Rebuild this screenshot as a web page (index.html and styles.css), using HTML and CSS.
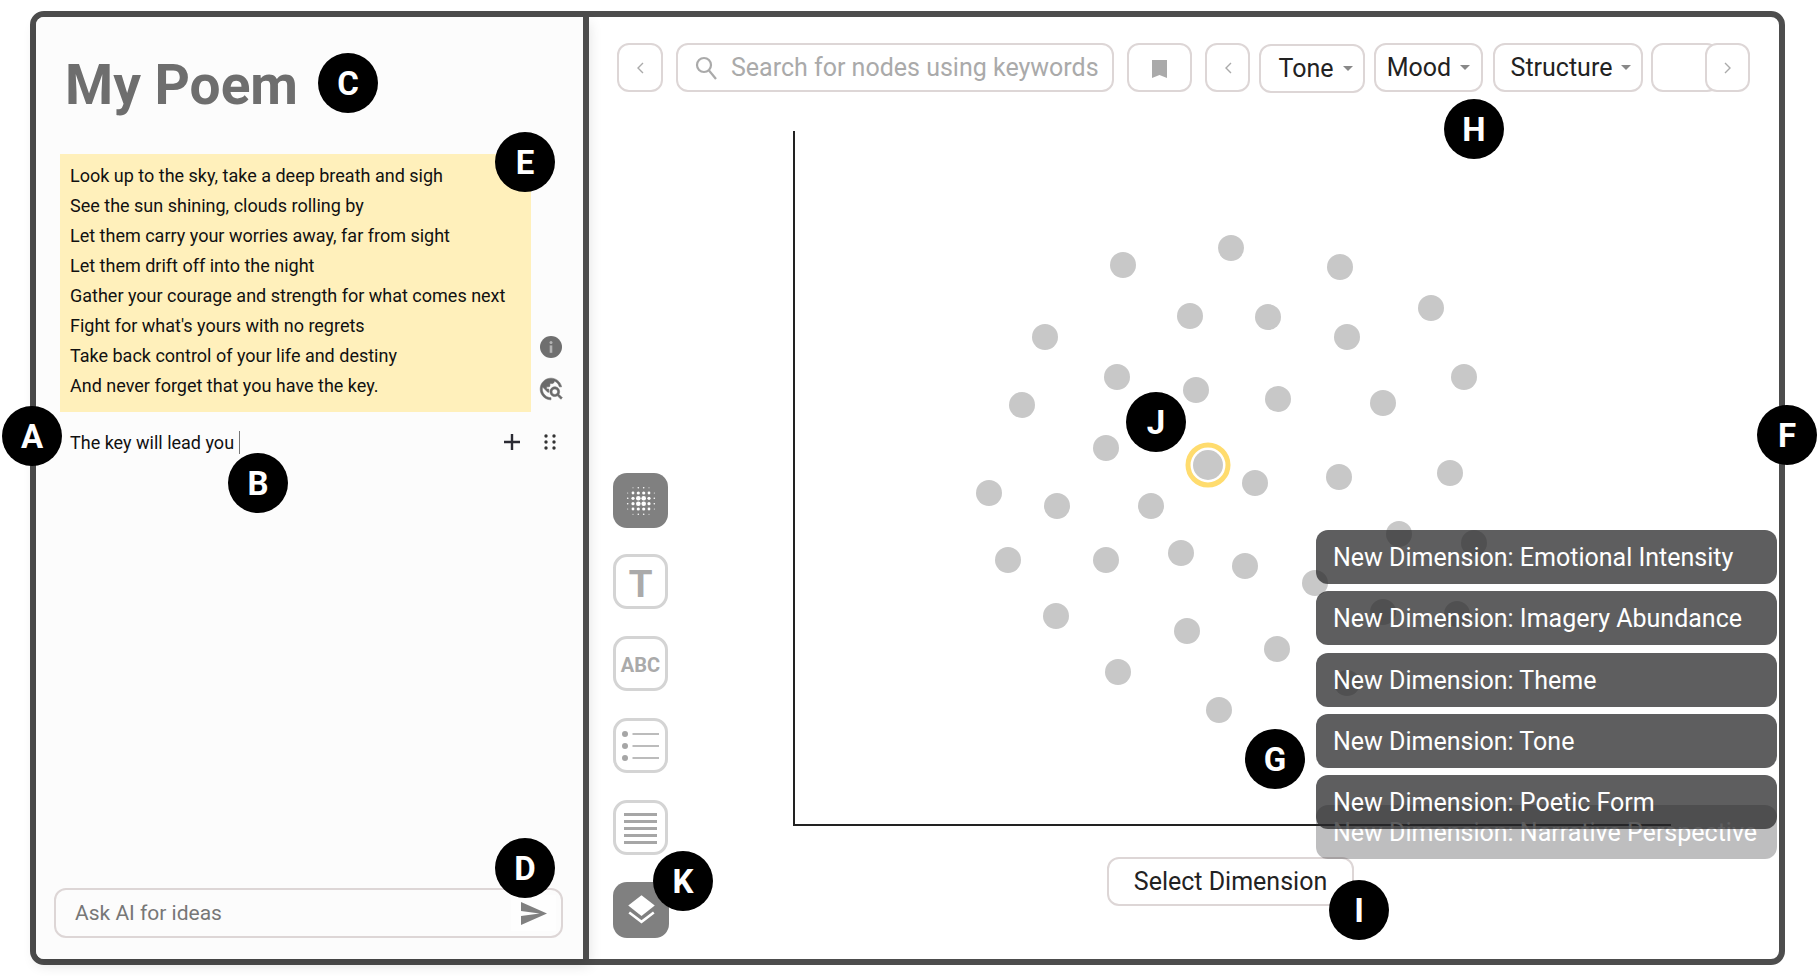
FILE: index.html
```html
<!DOCTYPE html>
<html lang="en">
<head>
    <meta charset="UTF-8">
    <meta name="viewport" content="width=device-width, initial-scale=1.0">
    <title>My Poem</title>
    <link rel="stylesheet" href="styles.css">
</head>
<body>
<div class="stage">
    <div class="frame">
        <!-- Poem editor -->
        <section class="poem-panel">
            <h1 class="title">My Poem</h1>

            <div class="poem-row">
                <div class="poem-block">
                    <p>Look up to the sky, take a deep breath and sigh</p>
                    <p>See the sun shining, clouds rolling by</p>
                    <p>Let them carry your worries away, far from sight</p>
                    <p>Let them drift off into the night</p>
                    <p>Gather your courage and strength for what comes next</p>
                    <p>Fight for what's yours with no regrets</p>
                    <p>Take back control of your life and destiny</p>
                    <p>And never forget that you have the key.</p>
                </div>
                <div class="poem-side">
                    <svg class="side-info" viewBox="0 0 22 22">
                        <circle cx="11" cy="11" r="11" fill="#6f6f6f"/>
                        <circle cx="11" cy="6.6" r="1.5" fill="#b4b4b4"/>
                        <rect x="9.7" y="9.4" width="2.6" height="7.4" fill="#b4b4b4"/>
                    </svg>
                    <svg class="side-explore" viewBox="0 0 24 24">
                        <path fill="#6a6a6a" stroke="#6a6a6a" stroke-width=".5" d="M19.3 16.9c.4-.7.7-1.5.7-2.4 0-2.5-2-4.5-4.5-4.5S11 12 11 14.5s2 4.5 4.5 4.5c.9 0 1.7-.3 2.4-.7l3.2 3.2 1.4-1.4-3.2-3.2zm-3.8.1c-1.4 0-2.5-1.1-2.5-2.5s1.1-2.5 2.5-2.5 2.5 1.1 2.5 2.5-1.1 2.5-2.5 2.5zM12 20v2C6.48 22 2 17.52 2 12S6.48 2 12 2c4.84 0 8.87 3.44 9.8 8h-2.07c-.64-2.46-2.4-4.47-4.73-5.41V5c0 1.1-.9 2-2 2h-2v2c0 .55-.45 1-1 1H8v2h2v3H9l-4.79-4.79C4.08 10.79 4 11.38 4 12c0 4.41 3.59 8 8 8z"/>
                    </svg>
                </div>
            </div>

            <div class="draft-row">
                <span>The key will lead you</span>
                <span class="caret"></span>
                <svg class="draft-plus" viewBox="0 0 16 16">
                    <path d="M8 0v16M0 8h16" stroke="#2b2b33" stroke-width="2.4" fill="none"/>
                </svg>
                <svg class="draft-grip" viewBox="0 0 12 16">
                    <circle cx="2" cy="2" r="1.7"/><circle cx="10" cy="2" r="1.7"/>
                    <circle cx="2" cy="8" r="1.7"/><circle cx="10" cy="8" r="1.7"/>
                    <circle cx="2" cy="14" r="1.7"/><circle cx="10" cy="14" r="1.7"/>
                </svg>
            </div>

            <div class="compose">
                <span>Ask AI for ideas</span>
                <span class="send-box">
                    <svg class="send" viewBox="2 3 21 18" preserveAspectRatio="none">
                        <path fill="#808080" d="M2.01 21L23 12 2.01 3 2 10l15 2-15 2z"/>
                    </svg>
                </span>
            </div>
        </section>

        <!-- Node explorer -->
        <section class="explore-panel">
            <div class="toolbar">
                <button class="btn btn-square btn-back">
                    <svg class="chev" viewBox="0 0 8 12"><path d="M7 1L2 6l5 5"/></svg>
                </button>
                <div class="btn search">
                    <svg class="search-icon" viewBox="0 0 22 24">
                        <circle cx="9" cy="9" r="7"/><path d="M14 14.5L21 23"/>
                    </svg>
                    <span>Search for nodes using keywords</span>
                </div>
                <button class="btn btn-bookmark">
                    <svg class="bookmark" viewBox="0 0 15 18"><path d="M0 0h15v18l-7.500-3L0 18z"/></svg>
                </button>
                <button class="btn btn-square">
                    <svg class="chev" viewBox="0 0 8 12"><path d="M7 1L2 6l5 5"/></svg>
                </button>
                <div class="dims">
                    <button class="btn dim dim-tone">Tone<i class="caret-down"></i></button>
                    <button class="btn dim dim-mood">Mood<i class="caret-down"></i></button>
                    <button class="btn dim dim-structure">Structure<i class="caret-down"></i></button>
                    <div class="btn dim-empty"></div>
                    <button class="btn btn-square btn-next">
                        <svg class="chev" viewBox="0 0 8 12"><path d="M1 1l5 5-5 5"/></svg>
                    </button>
                </div>
            </div>

            <div class="workspace">
                <div class="tools">
                    <div class="tool tool-on tool-first">
                        <svg class="halftone" viewBox="-15 -15 30 30" fill="#fff">
                            <defs>
                                <g id="quad">
                                    <circle cx="2.700" cy="2.700" r="2.300"/>
                                    <circle cx="8" cy="2.700" r="1.600"/><circle cx="2.700" cy="8" r="1.600"/>
                                    <circle cx="8" cy="8" r="1.400"/>
                                    <circle cx="13.300" cy="2.700" r=".8"/><circle cx="2.700" cy="13.300" r=".8"/>
                                    <circle cx="13.300" cy="8" r=".5"/><circle cx="8" cy="13.300" r=".5"/>
                                </g>
                            </defs>
                            <use href="#quad"/>
                            <use href="#quad" transform="rotate(90)"/>
                            <use href="#quad" transform="rotate(180)"/>
                            <use href="#quad" transform="rotate(270)"/>
                        </svg>
                    </div>
                    <div class="tool tool-t">T</div>
                    <div class="tool tool-abc">ABC</div>
                    <div class="tool">
                        <svg class="tool-svg" viewBox="0 0 55 55">
                            <circle cx="12" cy="16" r="3" fill="#a6a6a6"/>
                            <circle cx="12" cy="28" r="3" fill="#a6a6a6"/>
                            <circle cx="12" cy="40" r="3" fill="#a6a6a6"/>
                            <path d="M19.500 16H46M19.500 28H46M19.500 40H46" stroke="#a6a6a6" stroke-width="1.600"/>
                        </svg>
                    </div>
                    <div class="tool">
                        <svg class="tool-svg" viewBox="0 0 55 55">
                            <path d="M11 14.500h33M11 21.500h33M11 28.500h33M11 35.500h33M11 42.500h33" stroke="#a6a6a6" stroke-width="3"/>
                        </svg>
                    </div>
                    <div class="tool tool-on tool-layers">
                        <svg class="tool-svg" viewBox="0 0 56 55">
                            <path fill="#fff" d="M28 12l13.500 10.500L28 33 14.500 22.500z"/>
                            <path fill="none" stroke="#fff" stroke-width="2.600" d="M15.500 29.500L28 39l12.500-9.500"/>
                        </svg>
                    </div>
                </div>

                <div class="chart">
                    <div class="plot">
                        <svg class="scatter" width="1000" height="760" viewBox="795 131 1000 760">
                            <g fill="#c8c8c8">
                                <circle cx="1123" cy="265" r="13"/>
                                <circle cx="1231" cy="248" r="13"/>
                                <circle cx="1340" cy="267" r="13"/>
                                <circle cx="1190" cy="316" r="13"/>
                                <circle cx="1268" cy="317" r="13"/>
                                <circle cx="1431" cy="308" r="13"/>
                                <circle cx="1347" cy="337" r="13"/>
                                <circle cx="1045" cy="337" r="13"/>
                                <circle cx="1117" cy="377" r="13"/>
                                <circle cx="1196" cy="390" r="13"/>
                                <circle cx="1278" cy="399" r="13"/>
                                <circle cx="1383" cy="403" r="13"/>
                                <circle cx="1464" cy="377" r="13"/>
                                <circle cx="1022" cy="405" r="13"/>
                                <circle cx="1106" cy="448" r="13"/>
                                <circle cx="1255" cy="483" r="13"/>
                                <circle cx="1339" cy="477" r="13"/>
                                <circle cx="1450" cy="473" r="13"/>
                                <circle cx="989" cy="493" r="13"/>
                                <circle cx="1057" cy="506" r="13"/>
                                <circle cx="1151" cy="506" r="13"/>
                                <circle cx="1008" cy="560" r="13"/>
                                <circle cx="1106" cy="560" r="13"/>
                                <circle cx="1181" cy="553" r="13"/>
                                <circle cx="1245" cy="566" r="13"/>
                                <circle cx="1315" cy="583" r="13"/>
                                <circle cx="1399" cy="534" r="13"/>
                                <circle cx="1474" cy="543" r="13"/>
                                <circle cx="1383" cy="612" r="13"/>
                                <circle cx="1457" cy="614" r="13"/>
                                <circle cx="1056" cy="616" r="13"/>
                                <circle cx="1187" cy="631" r="13"/>
                                <circle cx="1277" cy="649" r="13"/>
                                <circle cx="1347" cy="683" r="13"/>
                                <circle cx="1118" cy="672" r="13"/>
                                <circle cx="1219" cy="710" r="13"/>
                            </g>
                            <circle cx="1208" cy="465" r="20" fill="#fff" stroke="#ffdc6e" stroke-width="5"/>
                            <circle cx="1208" cy="465" r="15" fill="#c8c8c8"/>
                        </svg>
                    </div>
                    <button class="btn select-dim">Select Dimension</button>
                </div>
            </div>

            <!-- Suggested dimensions -->
            <div class="chips">
                <div class="chip">New Dimension: Emotional Intensity</div>
                <div class="chip">New Dimension: Imagery Abundance</div>
                <div class="chip">New Dimension: Theme</div>
                <div class="chip">New Dimension: Tone</div>
                <div class="chip">New Dimension: Poetic Form</div>
                <div class="chip chip-fading">New Dimension: Narrative Perspective</div>
            </div>
        </section>
    </div>

    <!-- Figure callouts -->
    <span class="mark mark-a">A</span>
    <span class="mark mark-b">B</span>
    <span class="mark mark-c">C</span>
    <span class="mark mark-d">D</span>
    <span class="mark mark-e">E</span>
    <span class="mark mark-f">F</span>
    <span class="mark mark-g">G</span>
    <span class="mark mark-h">H</span>
    <span class="mark mark-i">I</span>
    <span class="mark mark-j">J</span>
    <span class="mark mark-k">K</span>
</div>
</body>
</html>
```

FILE: styles.css
```css
:root {
    --frame-color: #4d4d4d;
    --btn-border: #ddd6d6;
    --muted: #aaaaaa;
    --tool-border: #d4d4d4;
}

* {
    box-sizing: border-box;
}

body {
    margin: 0;
    background-color: #ffffff;
    font-family: 'Roboto', sans-serif;
    overflow: hidden;
}

button {
    font-family: inherit;
    background: none;
    padding: 0;
}

.stage {
    position: relative;
    width: 1819px;
    height: 976px;
    padding: 11px 34px 11px 30px;
}

.frame {
    display: flex;
    height: 100%;
    border: 6px solid var(--frame-color);
    border-radius: 14px;
}

/* Poem editor */
.poem-panel {
    display: flex;
    flex-direction: column;
    flex: 0 0 553px;
    padding: 36px 0 21px 24px;
    background-color: #fcfcfc;
    border-right: 6px solid var(--frame-color);
    border-radius: 8px 0 0 8px;
    box-shadow: 0 6px 14px rgba(0, 0, 0, 0.12);
}

.title {
    margin: 0 0 37px 5px;
    font-size: 55px;
    line-height: 64px;
    font-weight: 700;
    color: #6e6e6e;
}

.poem-row {
    display: flex;
}

.poem-block {
    width: 471px;
    padding: 7px 10px 11px;
    background-color: #fff0bb;
    font-size: 18px;
    line-height: 30px;
    color: #111111;
}

.poem-block p {
    margin: 0;
}

.poem-side {
    display: flex;
    flex-direction: column;
    justify-content: flex-end;
    align-items: center;
    gap: 18px;
    width: 22px;
    margin-left: 9px;
    padding-bottom: 10px;
}

.side-info {
    width: 22px;
    height: 22px;
}

.side-explore {
    width: 26px;
    height: 26px;
    flex: none;
}

.draft-row {
    display: flex;
    align-items: center;
    height: 30px;
    margin-top: 15px;
    padding-left: 10px;
    font-size: 18px;
    color: #111111;
}

.caret {
    width: 1px;
    height: 23px;
    margin-left: 5px;
    background-color: #777777;
}

.draft-plus {
    width: 16px;
    height: 16px;
    margin-left: 264px;
}

.draft-grip {
    width: 12px;
    height: 16px;
    margin-left: 24px;
    fill: #333333;
}

.compose {
    display: flex;
    align-items: center;
    justify-content: space-between;
    width: 509px;
    height: 50px;
    margin-top: auto;
    margin-left: -6px;
    padding-left: 19px;
    border: 2px solid var(--btn-border);
    border-radius: 12px;
    font-size: 21px;
    color: #777777;
}

.send-box {
    display: flex;
    align-items: center;
    justify-content: center;
    width: 45px;
    height: 36px;
    margin-right: 5px;
    background-color: #fefefe;
}

.send {
    width: 26px;
    height: 23px;
}

/* Node explorer */
.explore-panel {
    position: relative;
    flex: 1;
    display: flex;
    flex-direction: column;
    padding: 26px 0 21px 24px;
}

.toolbar {
    display: flex;
    gap: 13px;
    height: 49px;
    margin-left: 4px;
}

.btn {
    display: flex;
    align-items: center;
    justify-content: center;
    border: 2px solid var(--btn-border);
    border-radius: 12px;
    background-color: #ffffff;
    font-size: 25px;
    color: #222222;
}

.btn-square {
    width: 45px;
    height: 49px;
}

.btn-back {
    width: 46px;
}

.chev {
    width: 8px;
    height: 12px;
    fill: none;
    stroke: var(--muted);
    stroke-width: 1.400;
}

.search {
    justify-content: flex-start;
    width: 438px;
    height: 49px;
    padding-left: 17px;
    color: var(--muted);
}

.search-icon {
    width: 22px;
    height: 24px;
    margin-right: 14px;
    fill: none;
    stroke: var(--muted);
    stroke-width: 2.200;
}

.btn-bookmark {
    width: 65px;
    height: 49px;
}

.bookmark {
    width: 15px;
    height: 18px;
    margin-top: 2px;
    fill: var(--muted);
}

.dims {
    display: flex;
    gap: 10px;
    margin-left: -4px;
}

.dim {
    height: 49px;
}

.dim-tone {
    width: 106px;
    margin-top: 1px;
    margin-right: -1px;
    padding-left: 7px;
}

.dim-mood {
    width: 109px;
}

.dim-structure {
    width: 150px;
    padding-left: 6px;
}

.caret-down {
    width: 0;
    height: 0;
    margin-left: 9px;
    border-left: 5px solid transparent;
    border-right: 5px solid transparent;
    border-top: 5px solid #888888;
}

.dim-empty {
    width: 68px;
    height: 49px;
    margin-left: -2px;
}

.btn-next {
    margin-left: -24px;
}

.workspace {
    flex: 1;
    display: flex;
    min-height: 0;
}

.tools {
    display: flex;
    flex-direction: column;
    justify-content: flex-end;
    gap: 27px;
    width: 56px;
}

.tool {
    display: flex;
    align-items: center;
    justify-content: center;
    width: 55px;
    height: 55px;
    border: 3px solid var(--tool-border);
    border-radius: 14px;
    color: var(--muted);
    font-weight: 700;
}

.tool-on {
    border: none;
    background-color: #808080;
}

.tool-first {
    margin-bottom: -1px;
}

.tool-layers {
    width: 56px;
    height: 56px;
}

.tool-t {
    padding-top: 6px;
    font-family: 'Liberation Sans', sans-serif;
    font-size: 38px;
}

.tool-abc {
    padding-top: 2px;
    font-size: 20px;
}

.halftone {
    width: 30px;
    height: 30px;
}

.tool-svg {
    flex: none;
    width: 55px;
    height: 55px;
}

.chart {
    display: flex;
    flex-direction: column;
    margin-left: 124px;
    padding-top: 39px;
}

.plot {
    position: relative;
    width: 878px;
    height: 695px;
    border-left: 2px solid #222222;
    border-bottom: 2px solid #222222;
}

.scatter {
    position: absolute;
    top: 0;
    left: 0;
    overflow: visible;
}

.select-dim {
    width: 247px;
    height: 49px;
    margin: 31px 0 0 314px;
}

.chips {
    position: absolute;
    top: 513px;
    left: 727px;
    display: flex;
    flex-direction: column;
    gap: 7.250px;
    width: 461px;
}

.chip {
    position: relative;
    z-index: 1;
    height: 54px;
    padding-left: 17px;
    border-radius: 12px;
    background-color: rgba(40, 40, 42, 0.75);
    font-size: 25px;
    line-height: 55px;
    color: #ffffff;
}

.chip-fading {
    z-index: 0;
    margin-top: -31px;
    background-color: rgba(40, 40, 42, 0.3);
}

/* Figure callouts */
.mark {
    position: absolute;
    z-index: 2;
    display: flex;
    align-items: center;
    justify-content: center;
    width: 60px;
    height: 60px;
    margin: -30px 0 0 -30px;
    border-radius: 50%;
    background-color: #000000;
    color: #ffffff;
    font-size: 33px;
    font-weight: 700;
}

.mark-a { left: 32px; top: 436px; }
.mark-b { left: 258px; top: 483px; }
.mark-c { left: 348px; top: 83px; }
.mark-d { left: 525px; top: 868px; }
.mark-e { left: 525px; top: 162px; }
.mark-f { left: 1787px; top: 435px; }
.mark-g { left: 1275px; top: 759px; }
.mark-h { left: 1474px; top: 129px; }
.mark-i { left: 1359px; top: 910px; }
.mark-j { left: 1156px; top: 422px; }
.mark-k { left: 683px; top: 881px; }
```
